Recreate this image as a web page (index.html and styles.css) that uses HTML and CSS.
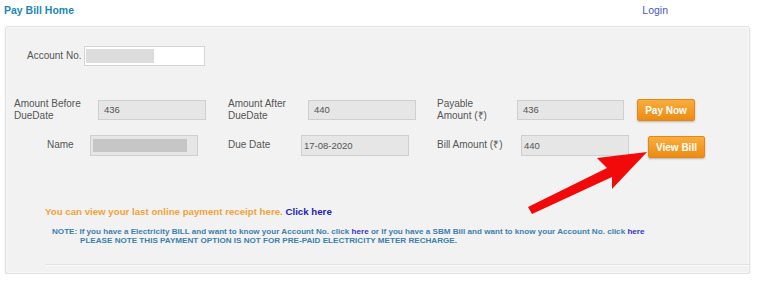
FILE: index.html
```html
<!DOCTYPE html>
<html lang="en">
<head>
  <meta charset="UTF-8">
  <meta name="viewport" content="width=device-width, initial-scale=1.0">
  <title>Pay Bill Home</title>
  <link rel="stylesheet" href="styles.css">
</head>
<body>

  <div class="top">
    <div class="home">Pay Bill Home</div>
    <a class="login" href="#">Login</a>
  </div>

  <div class="panel">
    <div class="row row1">
      <div class="lbl l-acc">Account No.</div>
      <div class="box box-white w-acc"><span class="blur blur-acc"></span></div>
    </div>

    <div class="row row2">
      <div class="lbl l-before">Amount Before<br>DueDate</div>
      <div class="box w108">436</div>
      <div class="lbl l-after">Amount After<br>DueDate</div>
      <div class="box w108">440</div>
      <div class="lbl l-pay">Payable<br>Amount (₹)</div>
      <div class="box w107">436</div>
      <button class="btn btn-pay">Pay Now</button>
    </div>

    <div class="row row3">
      <div class="lbl l-name">Name</div>
      <div class="box w108 tall"><span class="blur blur-name"></span></div>
      <div class="lbl l-due">Due Date</div>
      <div class="box w108 tall">17-08-2020</div>
      <div class="lbl l-bill">Bill Amount (₹)</div>
      <div class="box w108 tall">440</div>
      <button class="btn btn-view">View Bill</button>
    </div>

    <div class="receipt">You can view your last online payment receipt here. <a href="#">Click here</a></div>

    <div class="note">
      <div>NOTE: If you have a Electricity BILL and want to know your Account No. click <a href="#">here</a> or If you have a SBM Bill and want to know your Account No. click <a href="#">here</a></div>
      <div class="note2">PLEASE NOTE THIS PAYMENT OPTION IS NOT FOR PRE-PAID ELECTRICITY METER RECHARGE.</div>
    </div>

    <div class="rule"></div>
  </div>

  <svg class="arrow" width="759" height="282" viewBox="0 0 759 282">
    <polygon points="647,152 597,158 607,168 528,207 532,214 612,177 612,189" fill="#f20a0a"/>
  </svg>

</body>
</html>
```

FILE: styles.css
```css
body {
  margin: 0;
  font-family: 'Liberation Sans', Arial, sans-serif;
  color: #444;
  background: #fff;
  position: relative;
}
.top {
  display: flex;
  justify-content: space-between;
  height: 26px;
  padding: 3px 91px 0 4px;
  box-sizing: border-box;
  font-size: 10.5px;
  line-height: 14px;
}
.home { color: #1f86b8; font-weight: bold; }
.login { color: #4d56cf; text-decoration: none; }

.panel {
  margin: 0 9px 0 5px;
  height: 248px;
  box-sizing: border-box;
  background: #f2f2f2;
  border: 1px solid #e2e2e2;
  border-radius: 3px;
  box-shadow: inset 0 0 0 1px #f7f7f7, 0 1px 2px rgba(0,0,0,0.12);
  padding-top: 19px;
  font-size: 10px;
}
.row { display: flex; align-items: center; }
.row2 { margin-top: 32px; }
.row3 { margin-top: 13px; align-items: flex-start; }

.lbl {
  box-sizing: border-box;
  color: #555;
  line-height: 12px;
}
.l-acc { width: 78px; padding-left: 21px; }
.l-before { width: 92px; padding-left: 8px; }
.l-after { width: 102px; padding-left: 22px; }
.l-pay { width: 101px; padding-left: 21px; }
.l-name { width: 84px; padding-left: 41px; line-height: 19px; }
.l-due { width: 103px; padding-left: 30px; line-height: 19px; }
.l-bill { width: 112px; padding-left: 28px; line-height: 19px; }

.box {
  box-sizing: border-box;
  height: 20px;
  background: #e6e6e6;
  border: 1px solid #cfcfcf;
  padding-left: 5px;
  line-height: 18px;
  font-size: 9.5px;
  color: #555;
  display: flex;
  align-items: center;
}
.box-white { background: #fff; border-color: #d4d4d4; padding-left: 1px; }
.tall { height: 21px; padding-left: 2px; }
.w-acc { width: 121px; }
.w108 { width: 108px; }
.w107 { width: 107px; }

.blur { display: block; background: #dcdcdc; }
.blur-acc { width: 68px; height: 14px; }
.blur-name { width: 94px; height: 13px; background: #c6c6c6; }

.btn {
  font-family: 'Liberation Sans', Arial, sans-serif;
  font-weight: bold;
  font-size: 10px;
  color: #fff;
  height: 22px;
  border: 1px solid #e0891a;
  border-radius: 2px;
  background: linear-gradient(#f9ad3d, #ec8c12);
  box-shadow: 0 1px 2px rgba(0,0,0,0.25);
  padding: 0;
}
.btn-pay { width: 58px; margin-left: 13px; }
.btn-view { width: 57px; margin-left: 19px; margin-top: 1px; }

.receipt {
  margin-top: 47px;
  padding-left: 39px;
  font-size: 9.7px;
  font-weight: bold;
  color: #f2a23a;
  line-height: 13px;
}
.receipt a { color: #2323b8; text-decoration: none; }

.note {
  margin-top: 10px;
  padding-left: 46px;
  font-size: 8.1px;
  line-height: 8.5px;
  font-weight: bold;
  color: #3c80ac;
}
.note a { color: #3333c8; text-decoration: none; }
.note2 { padding-left: 28px; }

.rule {
  margin: 19px 0 0 39px;
  border-top: 1px solid #e2e2e2;
  border-bottom: 1px solid #fafafa;
}

.arrow {
  position: absolute;
  left: 0;
  top: 0;
}
```
